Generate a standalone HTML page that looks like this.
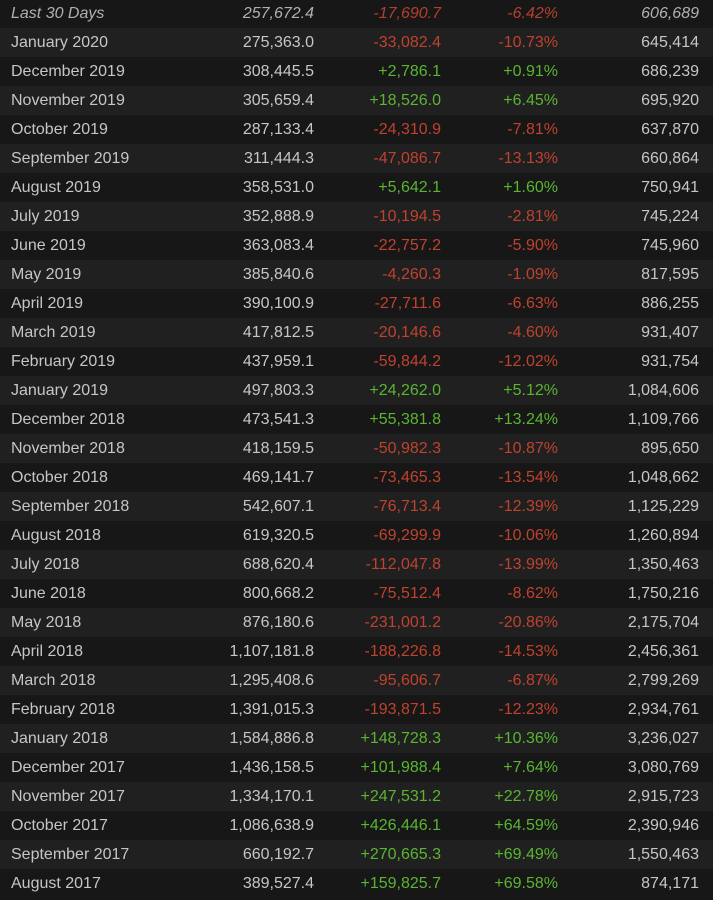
<!DOCTYPE html>
<html><head><meta charset="utf-8"><style>
html,body{margin:0;padding:0;background:#161616;width:713px;height:900px;overflow:hidden}
table{border-collapse:collapse;width:713px;position:absolute;top:-1px;left:0;font-family:"Liberation Sans",Arial,sans-serif;font-size:16px;color:#c6c6c6}
td{height:29px;padding:0;white-space:nowrap}
tr:nth-child(odd){background:#171717}
tr:nth-child(even){background:#202020}
td.m{padding-left:11px;text-align:left}
.r{color:#c0422e}.g{color:#5ab531}
tr.i td{font-style:italic;color:#b0b0b0}
tr.i td.r{color:#b3402e}
</style></head><body>
<table id="t"></table>
<script>
const d=`Last 30 Days|257,672.4|-17,690.7|-6.42%|606,689
January 2020|275,363.0|-33,082.4|-10.73%|645,414
December 2019|308,445.5|+2,786.1|+0.91%|686,239
November 2019|305,659.4|+18,526.0|+6.45%|695,920
October 2019|287,133.4|-24,310.9|-7.81%|637,870
September 2019|311,444.3|-47,086.7|-13.13%|660,864
August 2019|358,531.0|+5,642.1|+1.60%|750,941
July 2019|352,888.9|-10,194.5|-2.81%|745,224
June 2019|363,083.4|-22,757.2|-5.90%|745,960
May 2019|385,840.6|-4,260.3|-1.09%|817,595
April 2019|390,100.9|-27,711.6|-6.63%|886,255
March 2019|417,812.5|-20,146.6|-4.60%|931,407
February 2019|437,959.1|-59,844.2|-12.02%|931,754
January 2019|497,803.3|+24,262.0|+5.12%|1,084,606
December 2018|473,541.3|+55,381.8|+13.24%|1,109,766
November 2018|418,159.5|-50,982.3|-10.87%|895,650
October 2018|469,141.7|-73,465.3|-13.54%|1,048,662
September 2018|542,607.1|-76,713.4|-12.39%|1,125,229
August 2018|619,320.5|-69,299.9|-10.06%|1,260,894
July 2018|688,620.4|-112,047.8|-13.99%|1,350,463
June 2018|800,668.2|-75,512.4|-8.62%|1,750,216
May 2018|876,180.6|-231,001.2|-20.86%|2,175,704
April 2018|1,107,181.8|-188,226.8|-14.53%|2,456,361
March 2018|1,295,408.6|-95,606.7|-6.87%|2,799,269
February 2018|1,391,015.3|-193,871.5|-12.23%|2,934,761
January 2018|1,584,886.8|+148,728.3|+10.36%|3,236,027
December 2017|1,436,158.5|+101,988.4|+7.64%|3,080,769
November 2017|1,334,170.1|+247,531.2|+22.78%|2,915,723
October 2017|1,086,638.9|+426,446.1|+64.59%|2,390,946
September 2017|660,192.7|+270,665.3|+69.49%|1,550,463
August 2017|389,527.4|+159,825.7|+69.58%|874,171`;
let h='';d.split('\n').forEach((l,i)=>{const c=l.split('|');const k=c[2][0]=='+'?'g':'r';
h+=`<tr${i==0?' class="i"':''}><td class="m">${c[0]}</td><td style="text-align:right;width:162px">${c[1]}</td><td class="${k}" style="text-align:right;width:127px">${c[2]}</td><td class="${k}" style="text-align:right;width:117px">${c[3]}</td><td style="text-align:right;width:141px;padding-right:14px">${c[4]}</td></tr>`;});
document.getElementById('t').innerHTML=h;
</script>
</body></html>
